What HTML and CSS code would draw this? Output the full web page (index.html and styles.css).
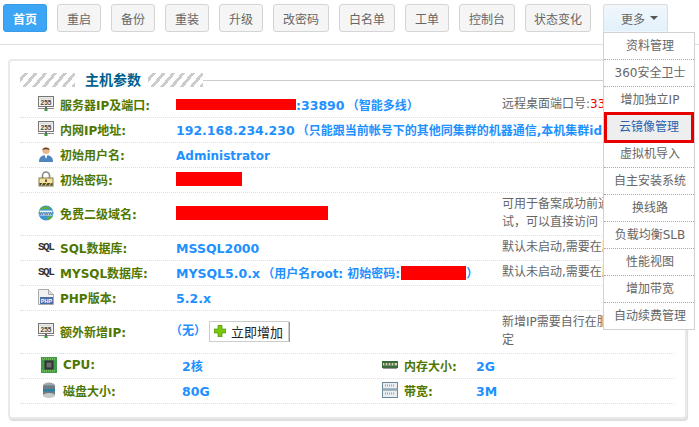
FILE: index.html
```html
<!DOCTYPE html>
<html lang="zh">
<head>
<meta charset="utf-8">
<title>主机参数</title>
<link rel="stylesheet" href="styles.css">
</head>
<body>
<svg class="defs" width="0" height="0" aria-hidden="true">
  <defs>
    <symbol id="i255" viewBox="0 0 16 16">
      <rect x="0.5" y="0.5" width="15" height="10" fill="#f4f4f4" stroke="#777"/>
      <rect x="1.5" y="1.5" width="13" height="2" fill="#ddd"/>
      <text x="8" y="9" class="ic255">255</text>
      <rect x="0" y="12" width="16" height="1" fill="#888"/>
      <rect x="7" y="11" width="2" height="2" fill="#666"/>
      <rect x="6.5" y="13" width="3" height="2" fill="#3b9a3b"/>
    </symbol>
  </defs>
</svg>
<nav class="nav">
  <a class="btn primary">首页</a>
  <a class="btn">重启</a>
  <a class="btn">备份</a>
  <a class="btn">重装</a>
  <a class="btn">升级</a>
  <a class="btn wide">改密码</a>
  <a class="btn wide">白名单</a>
  <a class="btn">工单</a>
  <a class="btn wide">控制台</a>
  <a class="btn wider">状态变化</a>
  <div class="more-wrap">
    <a class="btn more">更多<span class="caret"></span></a>
    <ul class="menu">
      <li>资料管理</li>
      <li>360安全卫士</li>
      <li>增加独立IP</li>
      <li class="marked">云镜像管理</li>
      <li>虚拟机导入</li>
      <li>自主安装系统</li>
      <li>换线路</li>
      <li>负载均衡SLB</li>
      <li>性能视图</li>
      <li>增加带宽</li>
      <li>自动续费管理</li>
    </ul>
  </div>
</nav>

<section class="panel">
  <header class="legend">
    <span class="stripes"></span>
    <h2>主机参数</h2>
    <span class="stripes"></span>
    <span class="rule"></span>
  </header>

  <div class="row">
    <svg class="ico"><use href="#i255"/></svg>
    <span class="label">服务器IP及端口:</span>
    <span class="value"><i class="redact r1"></i><b class="en gap">:33890</b> （智能多线）</span>
    <span class="note">远程桌面端口号:<em>33890</em></span>
  </div>
  <div class="row">
    <svg class="ico"><use href="#i255"/></svg>
    <span class="label">内网IP地址:</span>
    <span class="value long"><b class="en gap">192.168.234.230</b> （只能跟当前帐号下的其他同集群的机器通信,本机集群id</span>
  </div>
  <div class="row">
    <svg class="ico" viewBox="0 0 16 16">
      <circle cx="8" cy="4.500" r="3.600" fill="#e8b98c"/>
      <path d="M4.400 4.200C4.600 1 11.400 1 11.600 4.200 10 2.800 6 2.800 4.400 4.200z" fill="#5a3a22"/>
      <path d="M1 16c0-5 3-7 7-7s7 2 7 7z" fill="#4d86bd"/>
      <path d="M6.500 9l1.500 4 1.500-4z" fill="#fff"/>
    </svg>
    <span class="label">初始用户名:</span>
    <span class="value adm"><b class="en alpha">Administrator</b></span>
  </div>
  <div class="row">
    <svg class="ico" viewBox="0 0 16 16">
      <path d="M4.500 8V4.500a3.500 3.500 0 0 1 7 0V8" fill="none" stroke="#888" stroke-width="1.600"/>
      <rect x="1" y="7" width="14" height="8" fill="#f3e3a4" stroke="#8a7a45"/>
      <rect x="1.500" y="12" width="13" height="2.500" fill="#444"/>
      <path d="M3 14.500l2-2.500M7 14.500l2-2.500M11 14.500l2-2.500" stroke="#e8c94c" stroke-width="1.200"/>
      <rect x="7" y="8.500" width="2" height="2.500" fill="#6a5a2a"/>
    </svg>
    <span class="label">初始密码:</span>
    <span class="value"><i class="redact r2"></i></span>
  </div>
  <div class="row tall">
    <svg class="ico" viewBox="0 0 16 16">
      <circle cx="8" cy="8" r="7.500" fill="#3f93cf"/>
      <path d="M2 4c3-3 8-3 10-1 1 2-5 1-8 1-1 3-1 3-2 0zM9 15c-1-2 1-4 6-4-1 2-3 4-6 4z" fill="#5fae3c"/>
      <rect x="1.500" y="5.500" width="13" height="5" fill="#e6f3f9"/>
      <text x="8" y="10" class="icwww">www</text>
    </svg>
    <span class="label">免费二级域名:</span>
    <span class="value"><i class="redact r3"></i></span>
    <span class="note">可用于备案成功前通过此域名测<br>试，可以直接访问</span>
  </div>
  <div class="row">
    <span class="ico sql">SQL</span>
    <span class="label">SQL数据库:</span>
    <span class="value lat"><b class="en">MSSQL2000</b></span>
    <span class="note">默认未启动,需要在服务器内启动</span>
  </div>
  <div class="row">
    <span class="ico sql">SQL</span>
    <span class="label">MYSQL数据库:</span>
    <span class="value"><b class="en gap">MYSQL5.0.x</b> （用户名root: <span class="tiny-gap">初始密码:</span><i class="redact r4"></i>）</span>
    <span class="note">默认未启动,需要在服务器内启动</span>
  </div>
  <div class="row">
    <svg class="ico" viewBox="0 0 16 16">
      <path d="M0.500 0.500h10l5 5v10h-15z" fill="#f1f1f1" stroke="#aaa"/>
      <path d="M10.500 0.500v5h5" fill="#ddd" stroke="#aaa"/>
      <rect x="2" y="8" width="13" height="7" fill="#4a6fa5"/>
      <text x="8.500" y="13.600" class="icphp">PHP</text>
    </svg>
    <span class="label">PHP版本:</span>
    <span class="value lat"><b class="en">5.2.x</b></span>
  </div>
  <div class="row tall">
    <svg class="ico"><use href="#i255"/></svg>
    <span class="label">额外新增IP:</span>
    <span class="value">（无）<button class="add" type="button"><svg class="plus" viewBox="0 0 12 12"><path d="M4 0h4v4h4v4H8v4H4V8H0V4h4z" fill="#7ac70c" stroke="#3f8a00" stroke-width="0.600"/></svg>立即增加</button></span>
    <span class="note">新增IP需要自行在服务器内手动绑<br>定</span>
  </div>
  <div class="row spec">
    <div class="cell">
      <svg class="ico" viewBox="0 0 16 16">
        <rect width="16" height="16" fill="#3f9b4a"/>
        <rect x="3.500" y="3.500" width="9" height="9" fill="#333"/>
        <rect x="5.500" y="5.500" width="5" height="5" fill="#6d6d6d"/>
        <path d="M1 2h14M1 14h14" stroke="#a6d66c" stroke-dasharray="1 1"/>
      </svg>
      <span class="label">CPU:</span>
      <span class="value"><b class="en">2</b>核</span>
    </div>
    <div class="cell">
      <svg class="ico" viewBox="0 0 16 16">
        <rect y="4" width="16" height="7" fill="#3b6b3b"/>
        <path d="M1 6h14v2.500H1z" fill="#c9dca5"/>
        <path d="M3 6v2.500M6 6v2.500M9 6v2.500M12 6v2.500" stroke="#333"/>
        <path d="M1 11h14v1H1z" fill="#999"/>
      </svg>
      <span class="label">内存大小:</span>
      <span class="value lat"><b class="en">2G</b></span>
    </div>
  </div>
  <div class="row spec">
    <div class="cell">
      <svg class="ico" viewBox="0 0 16 16">
        <ellipse cx="8" cy="3.500" rx="6" ry="3" fill="#9aa5ad"/>
        <rect x="2" y="3.500" width="12" height="10" fill="#6f7c86"/>
        <rect x="2" y="7" width="12" height="2.500" fill="#2a7fa5"/>
        <ellipse cx="8" cy="13.500" rx="6" ry="2.500" fill="#c8c8c8"/>
      </svg>
      <span class="label">磁盘大小:</span>
      <span class="value lat"><b class="en">80G</b></span>
    </div>
    <div class="cell">
      <svg class="ico" viewBox="0 0 16 16">
        <rect x="0.500" y="0.500" width="15" height="6.500" fill="#e8eef2" stroke="#6b8798"/>
        <rect x="0.500" y="8" width="15" height="7.500" fill="#e8eef2" stroke="#6b8798"/>
        <path d="M3 3.500h10M3 11.500h10" stroke="#9ab" stroke-width="2" stroke-dasharray="1 1"/>
      </svg>
      <span class="label">带宽:</span>
      <span class="value lat"><b class="en">3M</b></span>
    </div>
  </div>
</section>
</body>
</html>
```

FILE: styles.css
```css
* { box-sizing: border-box; }
html, body { margin: 0; padding: 0; }
body {
  width: 699px;
  height: 427px;
  overflow: hidden;
  background: #fff;
  font-family: "DejaVu Sans", "Noto Sans CJK SC", sans-serif;
  font-size: 12px;
  color: #666;
}
.defs { position: absolute; }
.ic255 { font: bold 6.5px "Liberation Sans", sans-serif; fill: #444; text-anchor: middle; }
.icwww { font: bold 6px "Liberation Sans", sans-serif; fill: #2c6e9e; text-anchor: middle; }
.icphp { font: bold 5.5px "Liberation Sans", sans-serif; fill: #fff; text-anchor: middle; }

.nav {
  display: flex;
  gap: 10px;
  height: 45px;
  padding: 4px 0 0 3px;
  border-bottom: 1px solid #ddd;
}
.btn {
  display: flex;
  align-items: center;
  justify-content: center;
  width: 44px;
  height: 28px;
  background: #f5f5f5;
  border: 1px solid #d5d5d5;
  border-radius: 3px;
  font-size: 12px;
  color: #666;
}
.btn.wide { width: 56px; }
.btn.wider { width: 66px; }
.btn.primary { background: #3ca5f5; border-color: #3a9be6; color: #fff; font-weight: bold; }
.more-wrap { position: relative; margin-left: 2px; }
.btn.more {
  width: 65px;
  padding-left: 8px;
  background: linear-gradient(#f0f7fc, #e3f1fb);
  border-color: #dcdcdc;
  border-bottom-color: transparent;
  border-radius: 3px 3px 0 0;
  gap: 5px;
}
.caret {
  border-left: 4px solid transparent;
  border-right: 4px solid transparent;
  border-top: 4px solid #555;
}
.menu {
  position: absolute;
  top: 28px;
  left: 0;
  z-index: 5;
  width: 92px;
  margin: 0;
  padding: 0;
  list-style: none;
  background: #fff;
  border: 1px solid #d2d2d2;
}
.menu li {
  height: 27px;
  line-height: 26px;
  padding-left: 2px;
  text-align: center;
  border-bottom: 1px dotted #aaa;
  color: #666;
}
.menu li:last-child { border-bottom: 0; height: 26px; }
.menu .marked {
  position: relative;
  background: #eee;
  color: #2b62ad;
  outline: 3px solid #e60000;
  outline-offset: -1px;
  margin: 0 2px;
  padding-left: 0;
}

.panel {
  margin: 14px 0 0 8px;
  width: 679px;
  height: 360px;
  padding: 9px 11px 0 10px;
  background: #fff;
  border: 2px solid #e9e9e9;
  border-radius: 4px;
  box-shadow: 1px 2px 1px #ddd;
}
.legend {
  display: flex;
  align-items: center;
  height: 20px;
  margin: 0 -11px 3px 0;
}
.legend h2 {
  margin: 0 7px 0 10px;
  width: 56px;
  font-size: 14px;
  line-height: 16px;
  font-weight: bold;
  white-space: nowrap;
  color: #005f8c;
}
.stripes {
  width: 55px;
  height: 14px;
  background: repeating-linear-gradient(-50deg, #ccc 0 3px, #fff 3px 7.500px);
}
.rule { flex: 1; height: 1px; background: #ccc; }

.row {
  position: relative;
  display: flex;
  align-items: center;
  height: 25px;
  padding: 0 0 2px 18px;
  border-bottom: 1px dotted #ddd;
  white-space: nowrap;
}
.row.tall { height: 43px; }
.ico {
  flex: none;
  width: 16px;
  height: 16px;
}
.sql {
  font: 11px/16px "Liberation Mono", monospace;
  font-weight: bold;
  letter-spacing: -1.500px;
  color: #333;
}
.label {
  flex: none;
  width: 116px;
  margin-left: 6px;
  font-weight: bold;
  color: #4f7700;
}
.value {
  flex: none;
  width: 326px;
  overflow: hidden;
  font-weight: bold;
  font-size: 12px;
  font-feature-settings: "halt";
  color: #1e90ff;
}
.value.long { width: 427px; }
.value.lat { padding-top: 2px; }
.value.adm { padding-top: 4px; }
.en { font-size: 12.5px; }
.en.alpha { font-size: 12px; }
.gap { margin-right: 4px; }
.tiny-gap { margin-right: 1px; }
.note {
  flex: none;
  width: 101px;
  overflow: hidden;
  line-height: 18px;
  color: #666;
}
.note em { font-style: normal; color: #e00; }
.redact {
  display: inline-block;
  height: 14px;
  background: #f00;
  vertical-align: -2px;
}
.r1 { width: 122px; height: 11px; margin-left: -2px; vertical-align: 0; }
.r2 { width: 66px; }
.r3 { width: 153px; margin-left: -1px; }
.r4 { width: 65px; }
.add {
  display: inline-flex;
  align-items: center;
  gap: 5px;
  height: 21px;
  width: 80px;
  margin-left: 9px;
  padding: 0 0 0 4px;
  vertical-align: middle;
  background: #fff;
  border: 1px solid #ccc;
  box-shadow: 1px 1px 0 #999;
  font: 13px "DejaVu Sans", "Noto Sans CJK SC", sans-serif;
  color: #222;
}
.plus { width: 12px; height: 12px; flex: none; }

.spec { padding-left: 0; display: grid; grid-template-columns: 362px 1fr; }
.cell { display: flex; align-items: center; padding-left: 21px; }
.cell:last-child { padding-left: 0; }
.spec .label { width: 119px; margin-left: 6px; }
.spec .cell:last-child .label { width: 72px; }
.spec .value { width: auto; }
```
